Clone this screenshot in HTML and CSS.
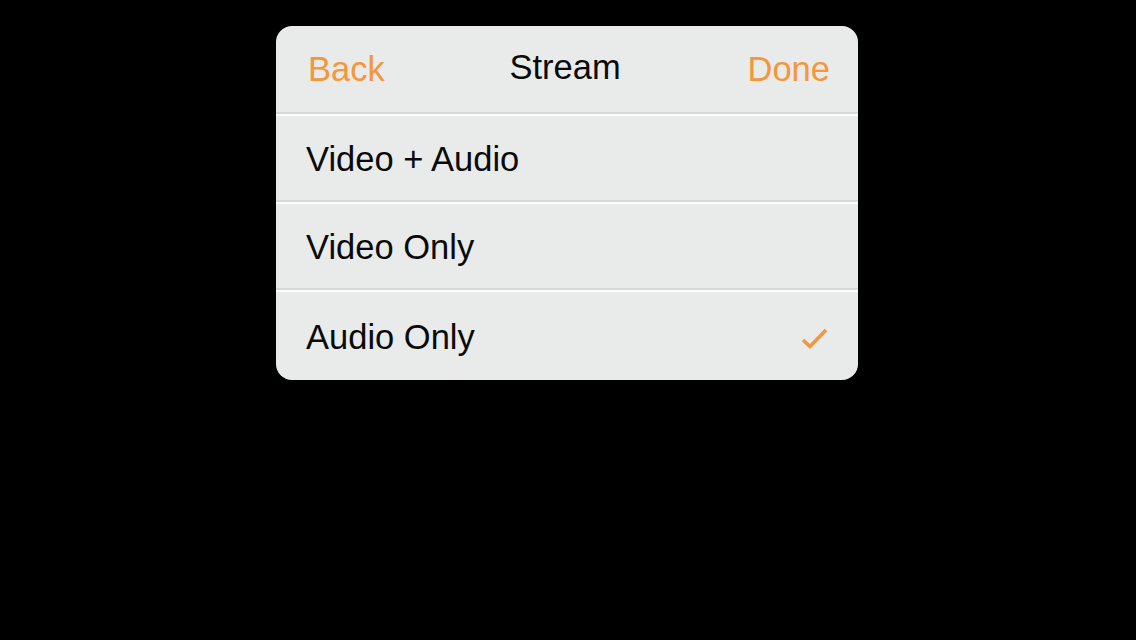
FILE: index.html
```html
<!DOCTYPE html>
<html lang="en">
<head>
    <meta charset="UTF-8">
    <meta name="viewport" content="width=device-width, initial-scale=1.0">
    <title>Stream</title>
    <link rel="stylesheet" href="styles.css">
</head>
<body>
    <div class="panel">
        <div class="panel-header">
            <span class="nav-btn">Back</span>
            <span class="panel-title">Stream</span>
            <span class="nav-btn">Done</span>
        </div>
        <ul class="option-list">
            <li class="option">Video + Audio</li>
            <li class="option">Video Only</li>
            <li class="option selected">
                Audio Only
                <svg class="check" width="28" height="22" viewBox="0 0 28 22">
                    <polyline points="3,13 10,19.5 26,3" fill="none" stroke="#f4973a" stroke-width="3.6"/>
                </svg>
            </li>
        </ul>
    </div>
</body>
</html>
```

FILE: styles.css
```css
body {
    margin: 0;
    background-color: #000;
    font-family: "Liberation Sans", Arial, sans-serif;
    color: #0a0a0a;
}
.panel {
    width: 582px;
    margin: 26px 0 0 276px;
    background-color: #e9eaea;
    border-radius: 16px;
    overflow: hidden;
}
.panel-header {
    height: 86px;
    display: flex;
    align-items: center;
    justify-content: space-between;
    padding: 0 28px 0 32px;
    border-bottom: 2px solid #d6d7d6;
    font-size: 34.5px;
}
.panel-title {
    margin-top: -3px;
    margin-left: -2px;
}
.nav-btn {
    color: #f4973a;
}
.option-list {
    list-style: none;
    margin: 0;
    padding: 0;
}
.option {
    height: 84px;
    display: flex;
    align-items: center;
    justify-content: space-between;
    padding: 3px 30px 0 30px;
    box-sizing: border-box;
    border-top: 2px solid #fbfbfb;
    border-bottom: 2px solid #d6d7d6;
    font-size: 34.5px;
}
.option:not(:last-child) {
    height: 88px;
}
.option:last-child {
    height: 90px;
    border-bottom: none;
}
```
